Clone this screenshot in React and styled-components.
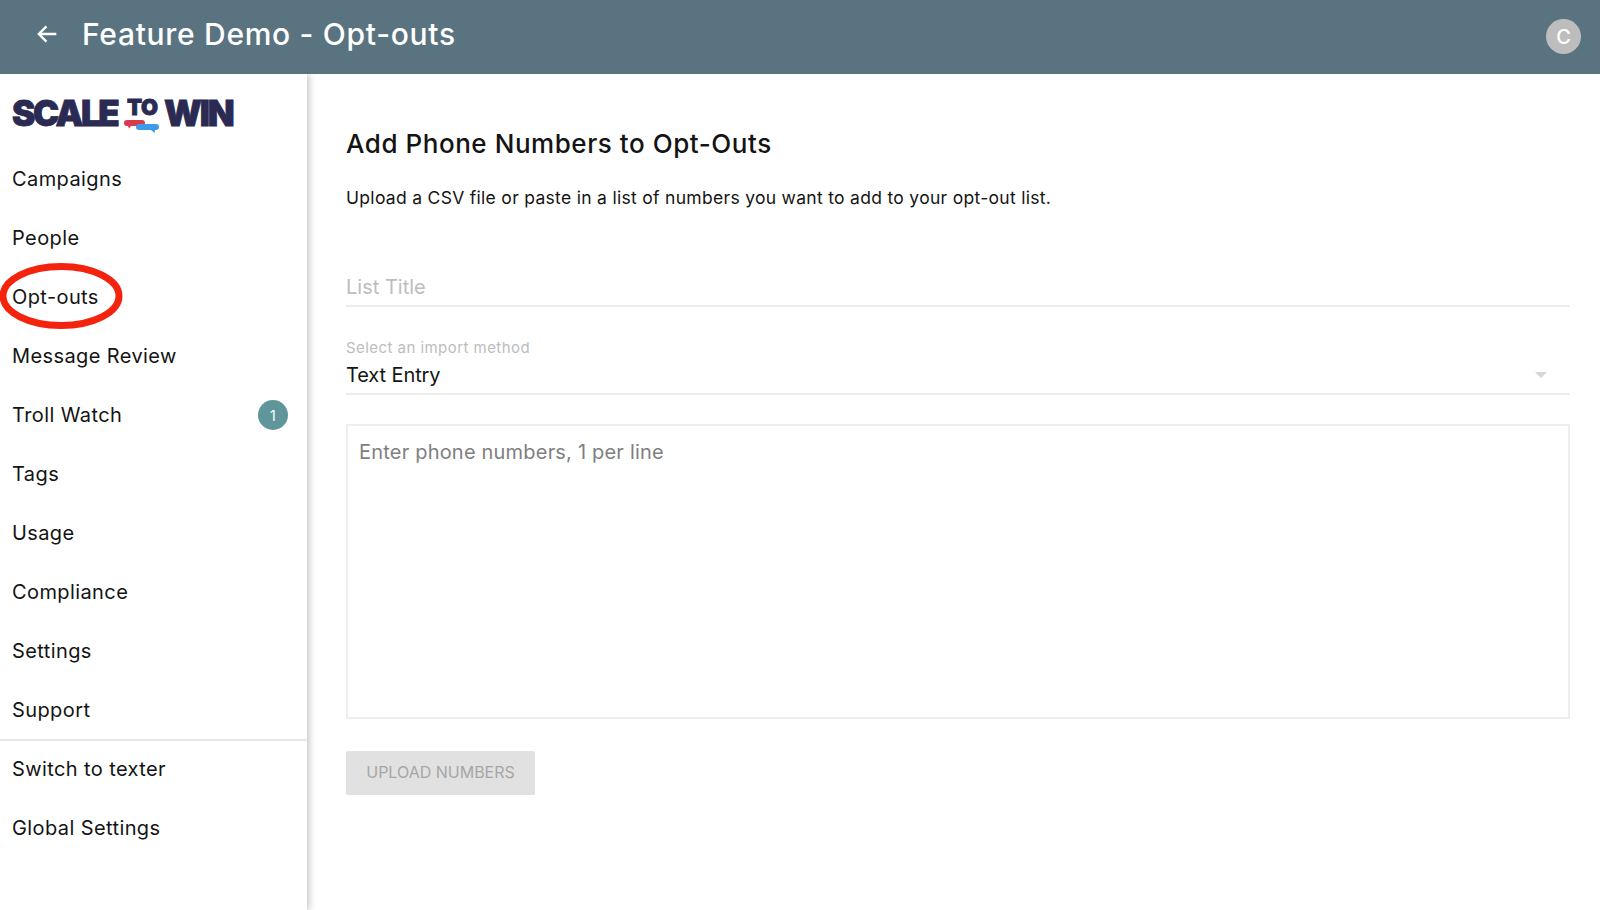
import React from "react";
import styled, { createGlobalStyle } from "styled-components";

const Global = createGlobalStyle`
  html, body { margin: 0; padding: 0; background: #fff; }
  * { box-sizing: border-box; }
  body { font-family: Inter, "Liberation Sans", sans-serif; color: #111; }
`;
const Page = styled.div`
  width: 1600px; height: 910px; overflow: hidden;
  display: flex; flex-direction: column; background: #fff;
`;
const Header = styled.header`
  position: relative; z-index: 2;
  flex: 0 0 74px; display: flex; align-items: center; background: #5a7380;
  padding: 0 19px 6px 33px;
`;
const BackButton = styled.button`
  border: 0; background: none; padding: 0; display: flex; color: #fff; width: 28px; height: 28px; margin-right: 21px;
`;
const Title = styled.h1`
  margin: 0; flex: 1; font-size: 30px; font-weight: 500; color: #fff; letter-spacing: 0.7px;
`;
const Avatar = styled.div`
  width: 35px; height: 35px; border-radius: 50%; background: #bdbdbd; color: #fff; margin-top: 5px;
  display: flex; align-items: center; justify-content: center; font-size: 20px; font-weight: 500;
`;
const Body = styled.div`
  flex: 1; display: flex; min-height: 0;
`;
const Sidebar = styled.nav`
  position: relative; flex: 0 0 307px; background: #fff; box-shadow: 2px 0 7px rgba(0,0,0,.24);
`;
const LogoRow = styled.div`
  height: 75.5px; padding: 15px 0 0 12px;
`;
const Item = styled.div`
  height: 59px; display: flex; align-items: center; justify-content: space-between;
  padding: 0 19px 0 12px; font-size: 20px; letter-spacing: 0.4px; color: #141414;
`;
const Divider = styled.hr`
  margin: -1px 0; border: 0; height: 2px; background: #e6e6e6;
`;
const Badge = styled.span`
  width: 30px; height: 30px; border-radius: 50%; background: #5e969c; color: #fff;
  display: flex; align-items: center; justify-content: center; font-size: 14px; font-weight: 400;
`;
const Ring = styled.svg`
  position: absolute; left: 0; top: 187px; pointer-events: none;
`;
const Main = styled.main`
  flex: 1; min-width: 0; padding: 53px 30px 0 39px;
`;
const Heading = styled.h2`
  margin: 0; font-size: 26px; font-weight: 500; line-height: 34px; color: #141414; letter-spacing: 0.55px;
`;
const Intro = styled.p`
  margin: 24.5px 0 0; font-size: 17.5px; line-height: 24px; color: #141414; letter-spacing: 0.3px;
`;
const TitleInput = styled.input`
  display: block; width: 100%; margin-top: 54px; height: 43px; padding: 5px 0 0; border: 0; outline: 0;
  border-bottom: 2px solid #ececec; font: inherit; font-size: 20px; letter-spacing: 0; background: none;
  &::placeholder { color: #bdbdbd; opacity: 1; }
`;
const SelectField = styled.div`
  position: relative; margin-top: 29px; height: 59px; border-bottom: 2px solid #ececec;
`;
const SelectLabel = styled.div`
  font-size: 15px; line-height: 20px; color: #bdbdbd; padding-top: 2px; letter-spacing: .45px;
`;
const SelectValue = styled.div`
  margin-top: 4px; font-size: 20px; line-height: 26px; color: #141414; letter-spacing: -.1px;
`;
const Caret = styled.span`
  position: absolute; right: 23px; top: 36px; width: 0; height: 0;
  border-left: 6.5px solid transparent; border-right: 6.5px solid transparent; border-top: 6.5px solid #d6d6d6;
`;
const Area = styled.textarea`
  display: block; width: 100%; height: 295px; margin-top: 29px; padding: 12px 11px; resize: none; outline: 0;
  border: 2px solid #eeeeee; border-radius: 0; font: inherit; font-size: 20px; line-height: 28px; letter-spacing: .2px;
  &::placeholder { color: #808080; opacity: 1; }
`;
const UploadButton = styled.button`
  display: block; width: 189px; height: 44px; margin-top: 32px; padding: 0 0 2px; border: 0; border-radius: 2px; background: #e1e1e1;
  color: #a6a6a6; font: inherit; font-size: 16px; letter-spacing: 0; text-transform: uppercase;
`;

const Logo = () => (
  <svg width="224" height="50" viewBox="0 -6 224 50" role="img" aria-label="Scale to Win">
    <g fontFamily="Inter, 'Liberation Sans', sans-serif" fontWeight="900" fill="#2a2a52" stroke="#2a2a52" strokeWidth="0.8">
      <text x="0" y="30.5" fontSize="35" letterSpacing="-2.4">SCALE</text>
      <text x="115" y="20" fontSize="22" letterSpacing="-0.4">TO</text>
      <text x="152" y="30.5" fontSize="35" letterSpacing="-2.2">WIN</text>
    </g>
    <path d="M115 25h15a3 3 0 0 1 0 6h-11l-2 2.5-1-2.5h-1a3 3 0 0 1 0-6z" fill="#d93a4c" />
    <path d="M127 29h17a3 3 0 0 1 0 6h-1l-.5 3-3.5-3h-12a3 3 0 0 1 0-6z" fill="#3d9be9" />
  </svg>
);

const top = ["Campaigns", "People", "Opt-outs", "Message Review", "Troll Watch", "Tags", "Usage", "Compliance", "Settings", "Support"];
const bottom = ["Switch to texter", "Global Settings"];

export default function App() {
  return (
    <Page>
      <Global />
      <Header>
        <BackButton aria-label="Back">
          <svg width="28" height="28" viewBox="0 0 24 24" fill="none" stroke="currentColor" strokeWidth="2"><path d="M20 12H5M11.5 5.5 5 12l6.5 6.5" /></svg>
        </BackButton>
        <Title>Feature Demo - Opt-outs</Title>
        <Avatar>C</Avatar>
      </Header>
      <Body>
        <Sidebar>
          <LogoRow><Logo /></LogoRow>
          {top.map((t) => (
            <Item key={t}>{t}{t === "Troll Watch" && <Badge>1</Badge>}</Item>
          ))}
          <Divider />
          {bottom.map((t) => <Item key={t}>{t}</Item>)}
          <Ring width="126" height="72" viewBox="0 0 126 72">
            <ellipse cx="61" cy="35" rx="58" ry="29.5" fill="none" stroke="#f3230e" strokeWidth="7" />
          </Ring>
        </Sidebar>
        <Main>
          <Heading>Add Phone Numbers to Opt-Outs</Heading>
          <Intro>Upload a CSV file or paste in a list of numbers you want to add to your opt-out list.</Intro>
          <TitleInput placeholder="List Title" />
          <SelectField>
            <SelectLabel>Select an import method</SelectLabel>
            <SelectValue>Text Entry</SelectValue>
            <Caret />
          </SelectField>
          <Area placeholder="Enter phone numbers, 1 per line" />
          <UploadButton>Upload Numbers</UploadButton>
        </Main>
      </Body>
    </Page>
  );
}
